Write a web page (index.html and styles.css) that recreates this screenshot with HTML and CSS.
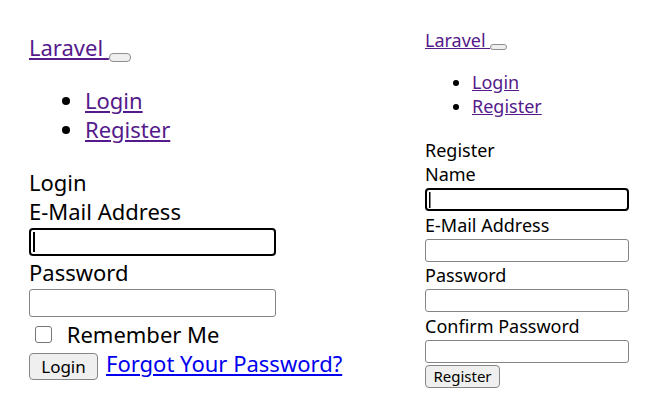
FILE: index.html
```html
<!DOCTYPE html>
<html lang="en">
<head>
<meta charset="utf-8">
<title>Laravel</title>
<link rel="stylesheet" href="styles.css">
</head>
<body>
<div class="screens">
  <section class="app app--login">
    <nav class="navbar">
      <div class="brand-line"><a class="brand" href="#">Laravel </a><button class="toggler" type="button"></button></div>
      <ul class="nav-list">
        <li><a class="nav-link" href="#">Login</a></li>
        <li><a class="nav-link" href="#">Register</a></li>
      </ul>
    </nav>
    <main class="card">
      <div class="card-title">Login</div>
      <form class="form">
        <label class="field-label" for="l-email">E-Mail Address</label>
        <input class="field field--focus" id="l-email" type="email">
        <label class="field-label" for="l-pass">Password</label>
        <input class="field" id="l-pass" type="password">
        <label class="check-line"><input class="check" type="checkbox"> Remember Me</label>
        <div class="actions">
          <button class="btn" type="button">Login</button>
          <a class="forgot" href="#">Forgot Your Password?</a>
        </div>
      </form>
    </main>
  </section>

  <section class="app app--register">
    <nav class="navbar">
      <div class="brand-line"><a class="brand" href="#">Laravel </a><button class="toggler" type="button"></button></div>
      <ul class="nav-list">
        <li><a class="nav-link" href="#">Login</a></li>
        <li><a class="nav-link" href="#">Register</a></li>
      </ul>
    </nav>
    <main class="card">
      <div class="card-title">Register</div>
      <form class="form">
        <label class="field-label" for="r-name">Name</label>
        <input class="field field--focus" id="r-name" type="text">
        <label class="field-label" for="r-email">E-Mail Address</label>
        <input class="field" id="r-email" type="email">
        <label class="field-label" for="r-pass">Password</label>
        <input class="field" id="r-pass" type="password">
        <label class="field-label" for="r-conf">Confirm Password</label>
        <input class="field" id="r-conf" type="password">
        <div class="actions">
          <button class="btn" type="button">Register</button>
        </div>
      </form>
    </main>
  </section>
</div>
</body>
</html>
```

FILE: styles.css
```css
html, body {
  margin: 0;
  padding: 0;
  background: #ffffff;
}

body {
  font-family: "Noto Sans", "Open Sans", sans-serif;
  color: #000000;
}

.screens {
  display: flex;
  align-items: flex-start;
}

.app {
  box-sizing: border-box;
}

.app--login {
  width: 396px;
  padding: 33px 0 0 29px;
  font-size: 22px;
  line-height: 29px;
}

.app--register {
  padding: 28px 0 0 29px;
  font-size: 18px;
  line-height: 24px;
}

.brand-line {
  white-space: nowrap;
}

.brand,
.nav-link {
  color: #551a8b;
  text-decoration: underline;
}

.toggler {
  display: inline-block;
  box-sizing: border-box;
  padding: 0;
  margin: 0;
  background: #efefef;
  border: 1.5px solid #8f8f8f;
  border-radius: 4px;
}

.app--login .toggler {
  width: 22px;
  height: 9px;
  vertical-align: -5px;
}

.app--register .toggler {
  width: 17px;
  height: 6px;
  vertical-align: -2px;
}

.nav-list {
  list-style: disc;
}

.app--login .nav-list {
  margin: 24px 0;
  padding-left: 56px;
}

.app--register .nav-list {
  margin: 18px 0 20px;
  padding-left: 47px;
}

.form {
  margin: 0;
  display: flex;
  flex-direction: column;
  align-items: flex-start;
}

.field-label {
  display: block;
}

.field {
  display: block;
  box-sizing: border-box;
  margin: 0;
  padding: 0 4px;
  background: #ffffff;
  border: 1px solid #858585;
  border-radius: 3px;
  font: inherit;
  outline: none;
}

.field--focus {
  border: 2px solid #000000;
  border-radius: 4px;
  background-image: linear-gradient(#000000, #000000);
  background-repeat: no-repeat;
}

.app--login .field {
  width: 247px;
  height: 28px;
  margin: 2px 0;
}

.app--login .field--focus {
  background-position: 2px 2px;
  background-size: 2px 20px;
}

.app--register .field {
  width: 204px;
  height: 23px;
  margin: 2px 0 1.7px;
}

.app--register .field--focus {
  background-position: 2px 2px;
  background-size: 1.5px 16px;
}

.check-line {
  display: flex;
  align-items: center;
  height: 29px;
  margin-top: 1px;
  white-space: pre;
}

.check {
  appearance: none;
  -webkit-appearance: none;
  box-sizing: border-box;
  width: 17px;
  height: 17px;
  margin: 0 9px 0 6px;
  border: 1.5px solid #767676;
  border-radius: 3px;
  background: #ffffff;
}

.actions {
  display: flex;
  align-items: flex-start;
}

.btn {
  box-sizing: border-box;
  margin: 0;
  padding: 0;
  background: #efefef;
  border: 1.5px solid #858585;
  border-radius: 4px;
  color: #000000;
  font-family: "Noto Sans", sans-serif;
}

.app--login .actions {
  margin-top: 4px;
}

.app--login .btn {
  width: 69px;
  height: 27px;
  font-size: 17px;
  line-height: 20px;
}

.app--register .btn {
  width: 75px;
  height: 23px;
  font-size: 15px;
  line-height: 18px;
}

.forgot {
  margin-left: 8px;
  color: #0000ee;
  text-decoration: underline;
  line-height: 20px;
}
```
